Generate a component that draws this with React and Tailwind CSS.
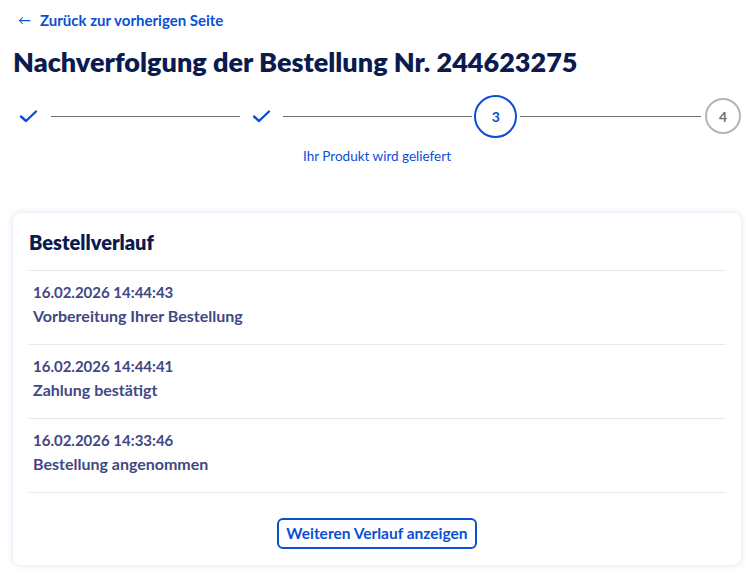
import React from "react";

function Check() {
  return (
    <svg width="19" height="15" viewBox="0 0 19 15" fill="none">
      <path d="M2 7.5 L7 12 L17 2.5" stroke="#0a4fd6" strokeWidth="2.4" strokeLinecap="round" strokeLinejoin="round" />
    </svg>
  );
}

const items = [
  { date: "16.02.2026 14:44:43", text: "Vorbereitung Ihrer Bestellung" },
  { date: "16.02.2026 14:44:41", text: "Zahlung bestätigt" },
  { date: "16.02.2026 14:33:46", text: "Bestellung angenommen" },
];

export default function App() {
  return (
    <div className="min-h-[577px] bg-white pl-[13px] pr-[5px] pt-[10px]" style={{ fontFamily: "Lato, 'Noto Sans', sans-serif" }}>
      <a className="flex items-center gap-[9px] pl-[5px] text-[15px] font-bold leading-[20px] text-[#0a4fd6]">
        <span className="text-[13px] font-normal">←</span>
        <span>Zurück zur vorherigen Seite</span>
      </a>
      <h1 className="mt-[17px] text-[27px] font-extrabold leading-[30px] text-[#0b1b4f]">
        Nachverfolgung der Bestellung Nr. 244623275
      </h1>
      <div className="mt-[17px] flex h-[44px] items-center">
        <div className="flex w-[32px] justify-center"><Check /></div>
        <div className="ml-[6px] h-px w-[189px] bg-[#707070]" />
        <div className="ml-[6px] flex w-[32px] justify-center"><Check /></div>
        <div className="ml-[5px] h-px w-[190px] bg-[#707070]" />
        <div className="ml-[2px] flex h-[43px] w-[43px] items-center justify-center rounded-full border-2 border-[#0a4fd6] text-[14px] font-bold text-[#0a4fd6]">3</div>
        <div className="ml-[3px] h-px w-[181px] bg-[#707070]" />
        <div className="ml-[4px] flex h-[36px] w-[36px] items-center justify-center rounded-full border-2 border-[#b5b5b5] text-[14px] font-bold text-[#707070]">4</div>
      </div>
      <div className="mt-[9px] text-center text-[13.5px] leading-[18px] text-[#0a4fd6]">Ihr Produkt wird geliefert</div>
      <div className="mt-[48px] rounded-[8px] bg-white px-[16px] pb-[16px] pt-[16px] shadow-[0_0_6px_rgba(110,100,200,0.22)]">
        <h2 className="text-[20px] font-extrabold leading-[26px] text-[#0b1b4f]">Bestellverlauf</h2>
        <div className="mt-[15px] border-t border-[#e6e6ee]">
          {items.map((it) => (
            <div key={it.date} className="border-b border-[#e6e6ee] pb-[18px] pl-[4px] pt-[11px] font-bold text-[#3f4884]">
              <div className="text-[15px] leading-[20px]">{it.date}</div>
              <div className="mt-[4px] text-[16px] leading-[20px]">{it.text}</div>
            </div>
          ))}
        </div>
        <div className="mt-[25px] flex justify-center">
          <button className="h-[31px] rounded-[6px] border-2 border-[#0a4fd6] px-[7px] text-[15.5px] font-bold text-[#0a4fd6]">
            Weiteren Verlauf anzeigen
          </button>
        </div>
      </div>
    </div>
  );
}
